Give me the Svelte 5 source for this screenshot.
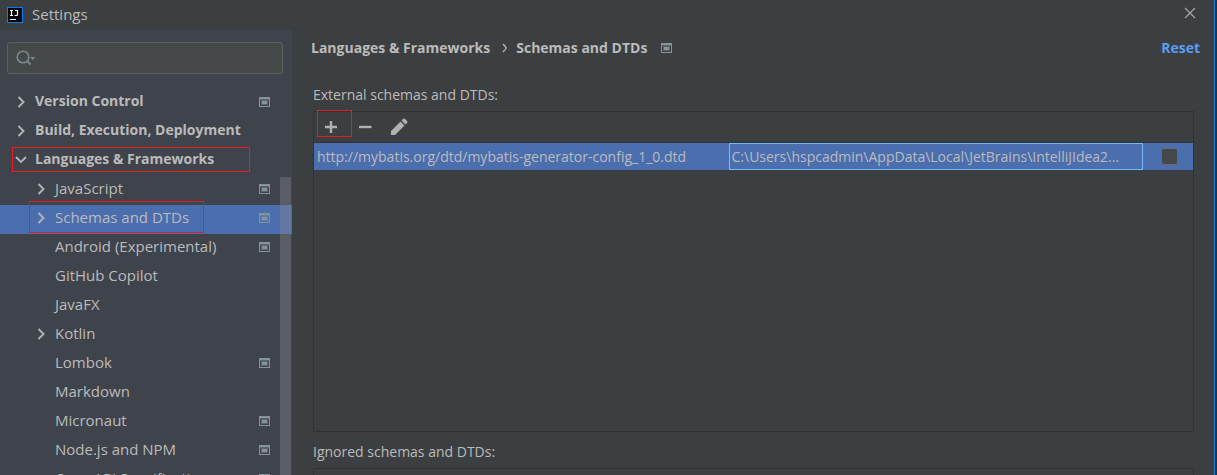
<script>
  let query = $state('');
  let remote = $state(false);
  let selected = $state('Schemas and DTDs');

  const items = [
    { label: 'Version Control', top: true, arrow: 'right', project: true },
    { label: 'Build, Execution, Deployment', top: true, arrow: 'right' },
    { label: 'Languages & Frameworks', top: true, arrow: 'down', mark: 'mark-group' },
    { label: 'JavaScript', arrow: 'right', project: true },
    { label: 'Schemas and DTDs', arrow: 'right', project: true, mark: 'mark-page' },
    { label: 'Android (Experimental)', project: true },
    { label: 'GitHub Copilot' },
    { label: 'JavaFX' },
    { label: 'Kotlin', arrow: 'right' },
    { label: 'Lombok', project: true },
    { label: 'Markdown' },
    { label: 'Micronaut', project: true },
    { label: 'Node.js and NPM', project: true },
    { label: 'OpenAPI Specifications', project: true }
  ];
</script>

{#snippet projectIcon()}
  <svg class="project" width="11" height="10" viewBox="0 0 11 10" shape-rendering="crispEdges" aria-hidden="true">
    <path fill="#87939a" fill-rule="evenodd" d="M0 0H11V10H0ZM1 2V9H10V2Z" />
    <path fill="#87939a" opacity=".4" d="M1 2H10V3H1ZM2 3H9V8H2Z" />
    <rect x="3" y="4" width="5" height="3" fill="#87939a" />
  </svg>
{/snippet}

<div class="window">
  <header class="titlebar">
    <svg class="logo" width="16" height="16" viewBox="0 0 16 16" aria-hidden="true">
      <rect width="16" height="16" fill="#087cfa" />
      <rect x="1" y="1" width="14" height="14" fill="#05070a" />
      <path d="M3 3.500H6M4.500 3.500V8.500M3 8.500H6M8 3.500H10.500V7.500Q10.500 8.500 9.500 8.500H7.500" fill="none" stroke="#fff" stroke-width="1.2" />
      <rect x="3" y="12" width="6" height="1" fill="#fff" />
    </svg>
    <span class="title">Settings</span>
    <button class="close" aria-label="Close">
      <svg width="12" height="12" viewBox="0 0 12 12" aria-hidden="true">
        <path d="M1 1 11 11M11 1 1 11" stroke="#a9abac" stroke-width="1.1" />
      </svg>
    </button>
  </header>

  <div class="body">
    <aside class="sidebar">
      <label class="search">
        <svg width="22" height="18" viewBox="0 0 22 18" aria-hidden="true">
          <circle cx="8" cy="8" r="5.800" fill="none" stroke="#7a878e" stroke-width="1.6" />
          <path d="M12 12 15.500 15.500" stroke="#7a878e" stroke-width="2" />
          <path d="M15 8H20.500L17.750 11Z" fill="#7a878e" />
        </svg>
        <input type="text" aria-label="Search settings" bind:value={query} />
      </label>

      <div class="tree-area">
        <ul class="tree">
          {#each items as item}
            <li>
              <button
                class="row"
                class:top={item.top}
                class:selected={selected === item.label}
                onclick={() => (selected = item.label)}
              >
                <span class="arrow">
                  {#if item.arrow === 'right'}
                    <svg width="12" height="12" viewBox="0 0 12 12" aria-hidden="true">
                      <path d="M3.500 1 8.500 6 3.500 11" fill="none" stroke="#b1b4b7" stroke-width="1.9" />
                    </svg>
                  {:else if item.arrow === 'down'}
                    <svg width="12" height="12" viewBox="0 0 12 12" aria-hidden="true">
                      <path d="M1 3 6 8 11 3" fill="none" stroke="#b1b4b7" stroke-width="1.9" />
                    </svg>
                  {/if}
                </span>
                <span class="name">{item.label}</span>
                {#if item.project}{@render projectIcon()}{/if}
              </button>
              {#if item.mark}<span class="mark {item.mark}"></span>{/if}
            </li>
          {/each}
        </ul>
        <div class="thumb"></div>
      </div>
    </aside>

    <main class="content">
      <nav class="crumbs" aria-label="Breadcrumb">
        <span>Languages &amp; Frameworks</span>
        <svg width="6" height="10" viewBox="0 0 6 10" aria-hidden="true">
          <path d="M1 1Q3 3 4.300 5Q3 7 1 9" fill="none" stroke="#bbbbbb" stroke-width="1.3" />
        </svg>
        <span class="current">Schemas and DTDs</span>
        {@render projectIcon()}
        <a class="reset" href="#reset">Reset</a>
      </nav>

      <h2>External schemas and DTDs:</h2>
      <section class="panel external">
        <div class="toolbar">
          <button aria-label="Add">
            <svg width="18" height="18" viewBox="0 0 18 18" aria-hidden="true">
              <path d="M7.800 3H10.200V7.800H15V10.200H10.200V15H7.800V10.200H3V7.800H7.800Z" fill="#afb1b3" />
            </svg>
            <span class="mark mark-add"></span>
          </button>
          <button aria-label="Remove">
            <svg width="18" height="18" viewBox="0 0 18 18" aria-hidden="true">
              <rect x="3" y="7.800" width="12.500" height="2.400" fill="#afb1b3" />
            </svg>
          </button>
          <button aria-label="Edit">
            <svg width="18" height="18" viewBox="0 0 18 18" aria-hidden="true">
              <path d="M1 17V13L10.500 3.500 14.500 7.500 5 17ZM11.500 2.500 13 1Q14 0 15 1L17 3Q18 4 17 5L15.500 6.500Z" fill="#afb1b3" />
            </svg>
          </button>
        </div>
        <table>
          <tbody>
            <tr>
              <td class="uri">http://mybatis.org/dtd/mybatis-generator-config_1_0.dtd</td>
              <td class="path">C:\Users\hspcadmin\AppData\Local\JetBrains\IntelliJIdea2...</td>
              <td class="check"><input type="checkbox" aria-label="Project scope" bind:checked={remote} /></td>
            </tr>
          </tbody>
        </table>
      </section>

      <h2 class="second">Ignored schemas and DTDs:</h2>
      <section class="panel ignored"></section>
    </main>
  </div>
</div>

<style>
  :global(body) {
    margin: 0;
    background: #3c3f41;
  }

  .window {
    display: flex;
    flex-direction: column;
    box-sizing: border-box;
    height: 100vh;
    overflow: hidden;
    background: #3c3f41;
    border-right: 2px solid #2b3038;
    box-shadow: inset -1px 0 #1a84dc;
    color: #bbbbbb;
    font: 15px/20px 'Segoe UI', 'Open Sans', 'Noto Sans', sans-serif;
  }

  button {
    padding: 0;
    border: 0;
    background: none;
    color: inherit;
    font: inherit;
  }

  svg {
    display: block;
    flex: none;
  }

  .titlebar {
    display: flex;
    flex: none;
    align-items: center;
    height: 30px;
    padding: 0 19px 0 7px;
  }

  .title {
    margin-left: 9px;
    padding-bottom: 2px;
  }

  .close {
    margin-left: auto;
    margin-bottom: 4px;
  }

  .body {
    display: flex;
    flex: 1;
    min-height: 0;
  }

  .sidebar {
    display: flex;
    flex: none;
    flex-direction: column;
    width: 292px;
    background: #3f434b;
  }

  .search {
    display: flex;
    flex: none;
    align-items: center;
    box-sizing: border-box;
    height: 32px;
    margin: 12px 9px 15px 7px;
    padding-left: 7px;
    border: 1px solid #5e6060;
    border-radius: 3px;
    background: #45494a;
  }

  .search input {
    flex: 1;
    min-width: 0;
    border: 0;
    outline: 0;
    background: none;
    color: inherit;
    font: inherit;
  }

  .tree-area {
    position: relative;
    flex: 1;
    min-height: 0;
    overflow: hidden;
  }

  .tree {
    margin: 0;
    padding: 0;
    list-style: none;
  }

  li {
    position: relative;
  }

  .row {
    display: flex;
    align-items: center;
    box-sizing: border-box;
    width: 100%;
    height: 29px;
    padding: 0 22px 4px 35px;
    text-align: left;
  }

  .row.top {
    padding-left: 15px;
    font-size: 14px;
    font-weight: 700;
  }

  .row.selected {
    background: #4b6eaf;
  }

  .arrow {
    width: 20px;
    flex: none;
  }

  .name {
    flex: 1;
    padding-bottom: 2px;
    white-space: nowrap;
  }

  .thumb {
    position: absolute;
    top: 88px;
    right: 1px;
    bottom: 0;
    width: 11px;
    background: rgba(133, 133, 140, 0.4);
  }

  .mark {
    position: absolute;
    box-sizing: border-box;
    border: 1px solid #e51c23;
    pointer-events: none;
  }

  .mark-group {
    top: 0;
    left: 12px;
    width: 238px;
    height: 25px;
  }

  .mark-page {
    top: -4px;
    left: 29px;
    width: 175px;
    height: 32px;
  }

  .mark-add {
    top: -8px;
    left: -5px;
    width: 35px;
    height: 27px;
  }

  .content {
    flex: 1;
    min-width: 0;
    padding: 8px 21px 0;
  }

  .crumbs {
    display: flex;
    align-items: center;
    height: 20px;
    margin: 0 -6px 27px -2px;
    font-size: 14px;
    font-weight: 700;
  }

  .crumbs svg {
    margin: 0 8px 0 12px;
  }

  .crumbs .project {
    margin: 0 0 0 14px;
  }

  .reset {
    margin-left: auto;
    color: #589df6;
    text-decoration: none;
  }

  h2 {
    margin: 0 0 6px;
    font-size: 14px;
    font-weight: 400;
    line-height: 20px;
  }

  h2.second {
    margin: 10px 0 6px;
  }

  .panel {
    box-sizing: border-box;
    border: 1px solid #323232;
  }

  .external {
    height: 321px;
  }

  .ignored {
    height: 120px;
  }

  .toolbar {
    display: flex;
    align-items: center;
    gap: 16px;
    height: 30px;
    padding-left: 8px;
    border-bottom: 1px solid #323232;
  }

  .toolbar button {
    position: relative;
  }

  table {
    width: 100%;
    border-collapse: collapse;
    table-layout: fixed;
    background: #4b6eaf;
    font-size: 14px;
  }

  td {
    box-sizing: border-box;
    height: 27px;
    padding: 0 3px;
    overflow: hidden;
    white-space: nowrap;
  }

  .path {
    outline: 1px solid #75b8ff;
    outline-offset: -1px;
  }

  .check {
    width: 50px;
    padding-left: 5px;
  }

  .check input {
    display: block;
    appearance: none;
    box-sizing: border-box;
    width: 17px;
    height: 17px;
    margin: 0 auto;
    border: 1px solid #6b6b6b;
    border-radius: 3px;
    background: #43494a;
  }
</style>
